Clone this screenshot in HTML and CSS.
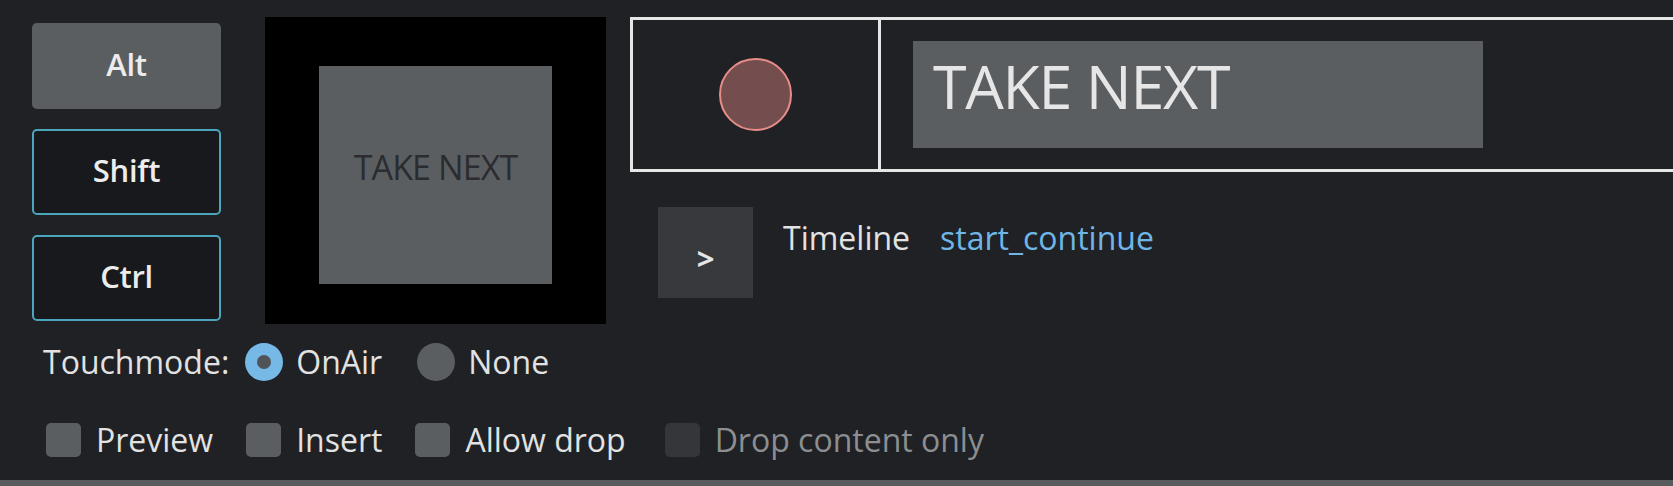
FILE: index.html
```html
<!DOCTYPE html>
<html lang="en">
<head>
<meta charset="utf-8">
<title>Take Next</title>
<link rel="stylesheet" href="styles.css">
</head>
<body>
<div class="page">
  <div class="top">
    <div class="mods">
      <div class="mod mod-on">Alt</div>
      <div class="mod mod-off">Shift</div>
      <div class="mod mod-off">Ctrl</div>
    </div>
    <div class="preview">
      <div class="preview-tile">TAKE NEXT</div>
    </div>
    <div class="main">
      <div class="panel">
        <div class="panel-state">
          <div class="dot"></div>
        </div>
        <div class="panel-body">
          <div class="title-box">TAKE NEXT</div>
        </div>
      </div>
      <div class="timeline-row">
        <div class="expand">&gt;</div>
        <div class="timeline-text">
          <span class="tl-label">Timeline</span>
          <span class="tl-value">start_continue</span>
        </div>
      </div>
    </div>
  </div>

  <div class="touch-row">
    <span class="label">Touchmode:</span>
    <span class="radio radio-on"><span class="radio-dot"></span></span>
    <span class="label opt">OnAir</span>
    <span class="radio radio-off"></span>
    <span class="label opt">None</span>
  </div>

  <div class="check-row">
    <span class="check"></span><span class="label">Preview</span>
    <span class="check"></span><span class="label">Insert</span>
    <span class="check"></span><span class="label">Allow drop</span>
    <span class="check check-disabled"></span><span class="label label-disabled">Drop content only</span>
  </div>

  <div class="bottom-strip"></div>
</div>
</body>
</html>
```

FILE: styles.css
```css
html, body {
  margin: 0;
  padding: 0;
  background: #1f2125;
  overflow: hidden;
}

.page {
  width: 1673px;
  height: 486px;
  display: flex;
  flex-direction: column;
  font-family: "Open Sans", "Noto Sans", "Liberation Sans", sans-serif;
  color: #e4e4e4;
  overflow: hidden;
}

.top {
  display: flex;
  align-items: flex-start;
}

.mods {
  display: flex;
  flex-direction: column;
  gap: 20px;
  padding: 23px 0 0 32px;
}

.mod {
  width: 189px;
  height: 86px;
  box-sizing: border-box;
  border-radius: 5px;
  display: flex;
  align-items: center;
  justify-content: center;
  padding-bottom: 4px;
  font-size: 31px;
  font-weight: 550;
  color: #ececec;
  letter-spacing: -0.3px;
}

.mod-on {
  background: #5b5e61;
}

.mod-off {
  background: #17191c;
  border: 2px solid #4ba5bd;
}

.preview {
  margin: 17px 0 0 44px;
  width: 341px;
  height: 307px;
  box-sizing: border-box;
  background: #000;
  padding: 49px 54px 40px 54px;
}

.preview-tile {
  width: 100%;
  height: 100%;
  background: #5b5e61;
  display: flex;
  align-items: center;
  justify-content: center;
  padding-bottom: 16px;
  box-sizing: border-box;
  color: #2a2c2f;
  font-size: 34px;
  letter-spacing: -0.9px;
}

.main {
  flex: 1;
  margin: 17px -20px 0 24px;
  display: flex;
  flex-direction: column;
}

.panel {
  display: flex;
  height: 155px;
  box-sizing: border-box;
  border: 3px solid #e6e6e6;
  background: #1f2125;
}

.panel-state {
  width: 245px;
  border-right: 3px solid #e6e6e6;
  display: flex;
  align-items: center;
  justify-content: center;
}

.dot {
  width: 73px;
  height: 73px;
  box-sizing: border-box;
  border-radius: 50%;
  background: #744e4f;
  border: 2px solid #e88c89;
}

.panel-body {
  flex: 1;
  padding: 21px 0 21px 32px;
}

.title-box {
  width: 570px;
  height: 107px;
  background: #5b5e61;
  color: #e6e6e6;
  font-size: 61px;
  letter-spacing: -1.3px;
  padding: 0 0 0 20px;
  box-sizing: border-box;
  line-height: 90px;
}

.timeline-row {
  display: flex;
  align-items: flex-start;
  margin-top: 35px;
  padding-left: 28px;
  gap: 30px;
}

.expand {
  width: 95px;
  height: 91px;
  background: #37393d;
  display: flex;
  align-items: center;
  justify-content: center;
  padding-top: 10px;
  box-sizing: border-box;
  font-size: 31px;
  font-weight: 700;
  color: #e6e6e6;
}

.timeline-text {
  margin-top: 9px;
  font-size: 32px;
  display: flex;
  gap: 30px;
}

.tl-label {
  color: #e2e2e2;
}

.tl-value {
  color: #6fb6e6;
}

.touch-row {
  display: flex;
  align-items: center;
  height: 42px;
  margin-top: 17px;
  padding-left: 43px;
}

.label {
  font-size: 32px;
  color: #e2e2e2;
  line-height: 42px;
}

.radio {
  width: 38px;
  height: 38px;
  border-radius: 50%;
  box-sizing: border-box;
  display: flex;
  align-items: center;
  justify-content: center;
}

.radio-on {
  background: #76b9e6;
  margin-left: 16px;
}

.radio-dot {
  width: 14px;
  height: 14px;
  border-radius: 50%;
  background: #505357;
}

.radio-off {
  background: #5b5e61;
  margin-left: 35px;
}

.opt {
  margin-left: 13px;
}

.check-row {
  display: flex;
  align-items: center;
  height: 42px;
  margin-top: 36px;
  padding-left: 46px;
}

.check {
  width: 35px;
  height: 34px;
  border-radius: 5px;
  background: #5b5e61;
  margin-right: 15px;
  margin-left: 33px;
}

.check:first-child {
  margin-left: 0;
}

.check-disabled {
  background: #34363a;
  margin-left: 39px;
}

.label-disabled {
  color: #8c8e91;
}

.bottom-strip {
  margin-top: auto;
  height: 6px;
  background: #595c5f;
}
```
